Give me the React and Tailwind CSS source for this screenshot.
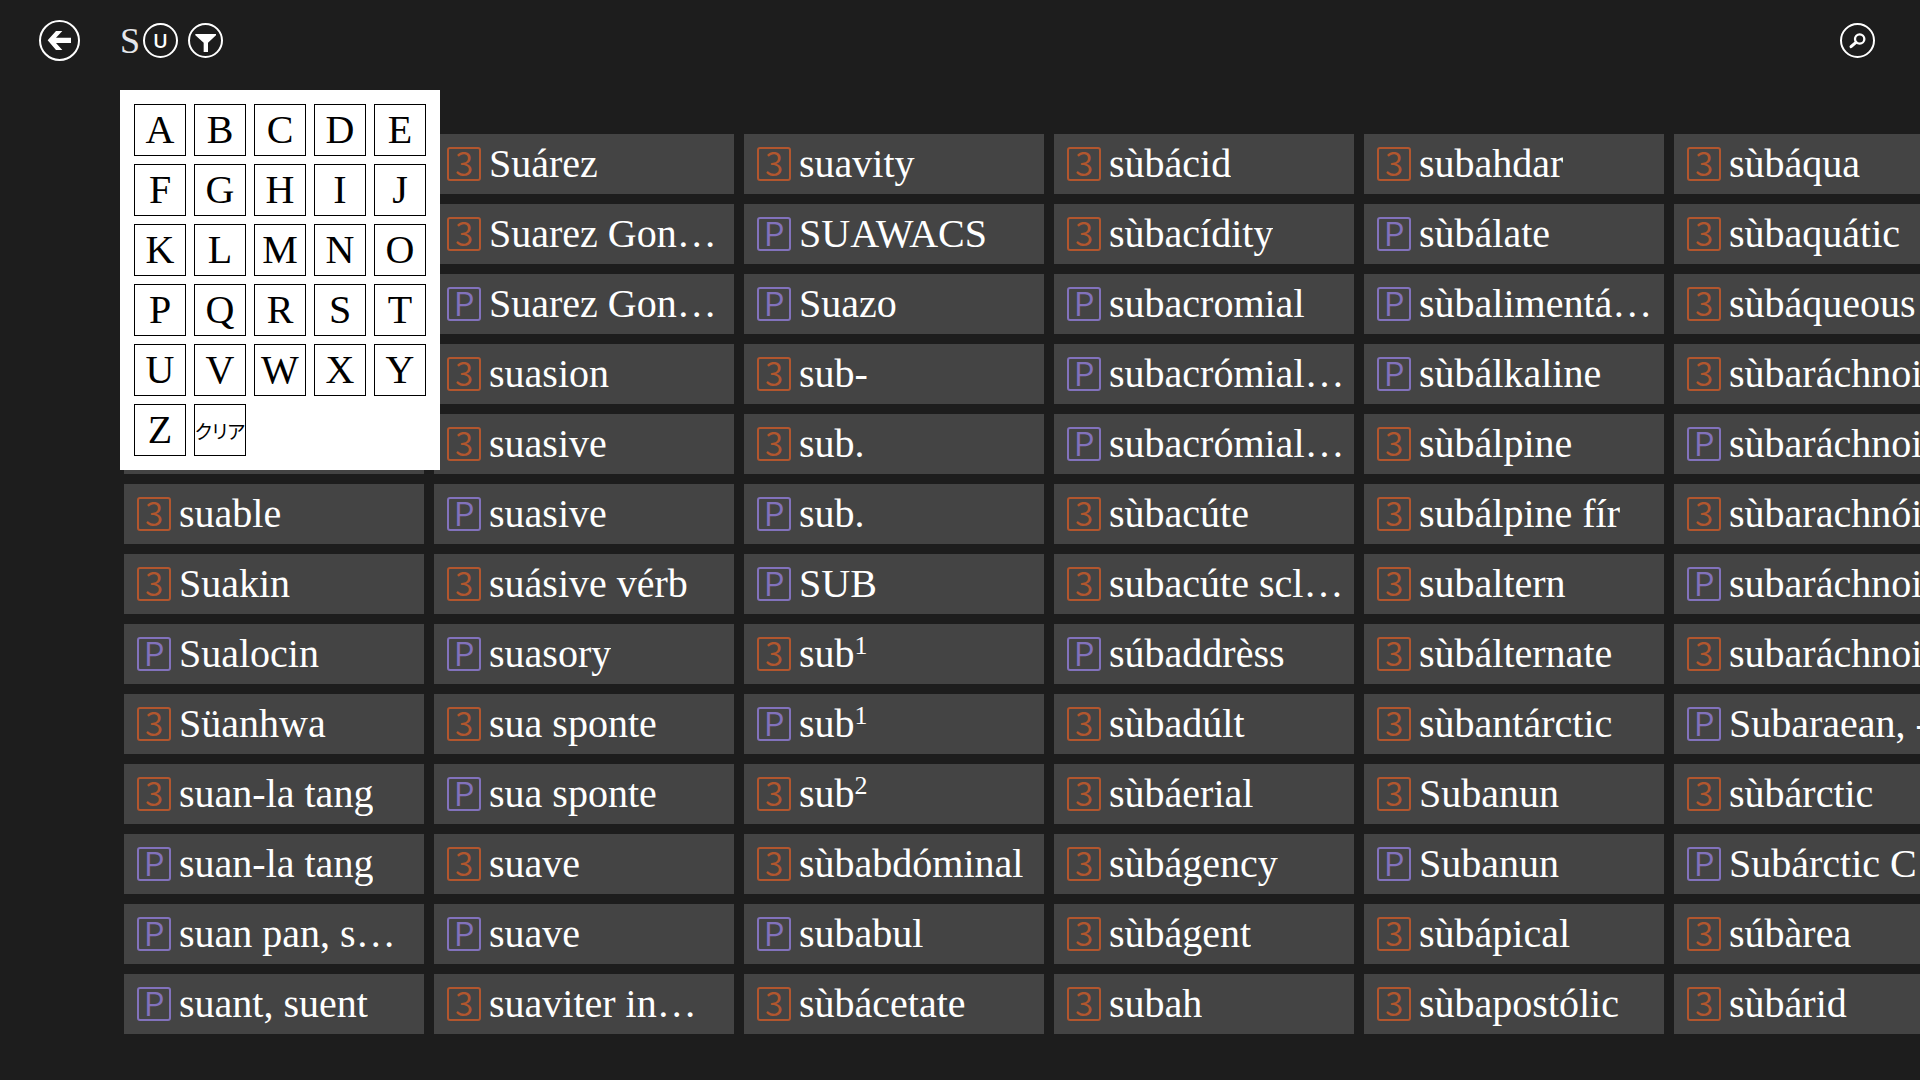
import { useState } from "react";

const LETTERS = "ABCDEFGHIJKLMNOPQRSTUVWXYZ".split("")

// [dictionary, headword, homonym number], top to bottom and then left to right
const WORDS = [
  null, null, null, null, null,
  ["3", "suable"], ["3", "Suakin"], ["P", "Sualocin"], ["3", "Süanhwa"],
  ["3", "suan-la tang"], ["P", "suan-la tang"], ["P", "suan pan, s…"], ["P", "suant, suent"],

  ["3", "Suárez"], ["3", "Suarez Gon…"], ["P", "Suarez Gon…"], ["3", "suasion"], ["3", "suasive"],
  ["P", "suasive"], ["3", "suásive vérb"], ["P", "suasory"], ["3", "sua sponte"],
  ["P", "sua sponte"], ["3", "suave"], ["P", "suave"], ["3", "suaviter in…"],

  ["3", "suavity"], ["P", "SUAWACS"], ["P", "Suazo"], ["3", "sub-"], ["3", "sub."],
  ["P", "sub."], ["P", "SUB"], ["3", "sub", 1], ["P", "sub", 1],
  ["3", "sub", 2], ["3", "sùbabdóminal"], ["P", "subabul"], ["3", "sùbácetate"],

  ["3", "sùbácid"], ["3", "sùbacídity"], ["P", "subacromial"], ["P", "subacrómial…"], ["P", "subacrómial…"],
  ["3", "sùbacúte"], ["3", "subacúte scl…"], ["P", "súbaddrèss"], ["3", "sùbadúlt"],
  ["3", "sùbáerial"], ["3", "sùbágency"], ["3", "sùbágent"], ["3", "subah"],

  ["3", "subahdar"], ["P", "sùbálate"], ["P", "sùbalimentá…"], ["P", "sùbálkaline"], ["3", "sùbálpine"],
  ["3", "subálpine fír"], ["3", "subaltern"], ["3", "sùbálternate"], ["3", "sùbantárctic"],
  ["3", "Subanun"], ["P", "Subanun"], ["3", "sùbápical"], ["3", "sùbapostólic"],

  ["3", "sùbáqua"], ["3", "sùbaquátic"], ["3", "sùbáqueous"], ["3", "sùbaráchnoid"], ["P", "sùbaráchnoid"],
  ["3", "sùbarachnóid"], ["P", "subaráchnoid"], ["3", "subaráchnoid"], ["P", "Subaraean, -"],
  ["3", "sùbárctic"], ["P", "Subárctic C…"], ["3", "súbàrea"], ["3", "sùbárid"],
]

function BackIcon() {
  return (
    <svg viewBox="0 0 123 123" className="w-full h-full" aria-hidden="true">
      <circle cx="61.5" cy="61.5" r="58.5" fill="none" stroke="currentColor" strokeWidth="6" />
      <path d="M26 61 51 33H70L51 53H96V69H51L70 90H51Z" fill="currentColor" />
    </svg>
  )
}

function FilterIcon() {
  return (
    <svg viewBox="0 0 105 105" className="w-full h-full" aria-hidden="true">
      <circle cx="52.5" cy="52.5" r="49.5" fill="none" stroke="currentColor" strokeWidth="6" />
      <path d="M22 33H84V37L60 59V87H47V59L22 37Z" fill="currentColor" />
    </svg>
  )
}

function SearchIcon() {
  return (
    <svg viewBox="0 0 105 105" className="w-full h-full" aria-hidden="true">
      <circle cx="52.5" cy="52.5" r="49.5" fill="none" stroke="currentColor" strokeWidth="6" />
      <circle cx="59" cy="48" r="14" fill="none" stroke="currentColor" strokeWidth="7" />
      <path d="M33 71 48 58" stroke="currentColor" strokeWidth="9" strokeLinecap="round" />
    </svg>
  )
}

function Badge({ type }) {
  return (
    <span className={`flex shrink-0 items-center justify-center w-[34px] h-[34px] pb-[3px] rounded-[3px] border-2 font-['Noto_Sans_CJK_JP',sans-serif] font-[350] text-[33px] leading-none ${type === "3" ? "border-[#b2562e] text-[#b2562e]" : "border-[#8272bc] text-[#8272bc]"}`}>
      {type}
    </span>
  )
}

function WordTile({ word }) {
  return (
    <li className="bg-[#444444]">
      {word && <button className="flex items-center gap-2 w-full h-full pl-[13px] pr-2 text-left">
        <Badge type={word[0]} />
        <span className="min-w-0 truncate text-[40px] leading-[60px]">
          {word[1]}{word[2] && <sup className="text-[26px] leading-none">{word[2]}</sup>}
        </span>
      </button>}
    </li>
  )
}

export default function App() {
  const [showLetters, setShowLetters] = useState(true)
  const [letter, setLetter] = useState("U")

  return (
    <div className="min-h-screen overflow-hidden bg-[#1d1d1d] text-white font-['Liberation_Serif','Noto_Sans_CJK_JP',serif]">
      <header className="flex items-center pt-5 pl-[39px] pr-[45px]">
        <button aria-label="Back" className="w-[41px] h-[41px] mr-10"><BackIcon /></button>
        <h1 className="text-4xl leading-10 text-gray-200 mr-[3px]">S</h1>
        <button
          onClick={() => setShowLetters(!showLetters)}
          className="flex items-center justify-center w-[35px] h-[35px] rounded-full border-2 font-['Open_Sans',sans-serif] font-semibold text-xl leading-none"
        >
          {letter}
        </button>
        <button aria-label="Filter" className="w-[35px] h-[35px] ml-[10px]"><FilterIcon /></button>
        <button aria-label="Search" className="w-[35px] h-[35px] ml-auto"><SearchIcon /></button>
      </header>

      <main className="relative mt-[73px] ml-[124px] pb-11">
        <ul className="grid grid-flow-col grid-rows-[repeat(13,60px)] auto-cols-[300px] gap-[10px]">
          {WORDS.map((word, i) => <WordTile key={i} word={word} />)}
        </ul>

        {showLetters && <div className="absolute -top-11 -left-1 grid grid-cols-5 gap-2 w-80 p-[14px] bg-white text-black">
          {LETTERS.map(l => (
            <button key={l} onClick={() => setLetter(l)} className="flex items-center justify-center h-[52px] border border-black text-[40px] leading-none">
              {l}
            </button>
          ))}
          <button onClick={() => setLetter("")} className="flex items-center justify-center h-[52px] border border-black font-['Noto_Sans_CJK_JP',sans-serif] text-[19px] leading-none whitespace-nowrap [font-feature-settings:'palt']">
            クリア
          </button>
        </div>}
      </main>
    </div>
  )
}
